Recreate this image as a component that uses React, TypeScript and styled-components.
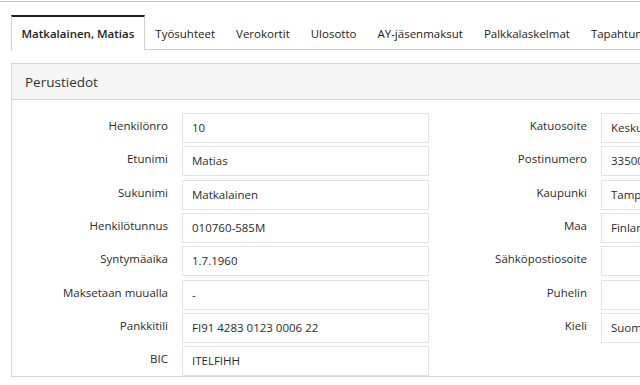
import React from 'react';
import styled, { createGlobalStyle, css } from 'styled-components';

const GlobalStyle = createGlobalStyle`
  html, body {
    margin: 0;
    padding: 0;
    background: #ffffff;
    overflow: hidden;
  }
  body {
    font-family: 'Open Sans', 'Liberation Sans', sans-serif;
    color: #333333;
  }
`;

const Page = styled.div`
  width: 640px;
  height: 385px;
  overflow: hidden;
  border-top: 1px solid #c8c8c8;
  margin-top: 1px;
  box-sizing: border-box;
  padding: 13px 0 0 11px;
`;

const TabBar = styled.div`
  display: flex;
  height: 35px;
  border-bottom: 1px solid #cfcfcf;
  width: 900px;
  box-sizing: border-box;
`;

const Tab = styled.div<{ active?: boolean }>`
  display: flex;
  align-items: center;
  padding: 0 9.5px;
  font-size: 11.5px;
  white-space: nowrap;
  color: #222222;
  border: 1px solid transparent;
  border-bottom: none;
  margin-bottom: -1px;
  ${(props) =>
    props.active
      ? css`
          font-weight: 600;
          background: #ffffff;
          border-color: #d2d2d2;
          border-top: 2px solid #1e1e1e;
        `
      : ''}
`;

const Panel = styled.div`
  margin-top: 13px;
  width: 900px;
  border: 1px solid #d6d6d6;
  border-right: none;
`;

const PanelHeader = styled.div`
  height: 35px;
  background: #f5f5f5;
  border-bottom: 1px solid #d6d6d6;
  display: flex;
  align-items: center;
  padding-left: 13px;
  font-size: 13.5px;
  color: #333333;
`;

const PanelBody = styled.div`
  display: flex;
  gap: 8px;
  padding: 13px 0 0 6px;
`;

const FieldColumn = styled.div`
  display: grid;
  grid-template-columns: 150px 247px;
  column-gap: 14px;
  row-gap: 3.33px;
  align-content: start;
`;

const Label = styled.div`
  font-size: 11.5px;
  text-align: right;
  color: #2b2b2b;
  height: 30px;
  line-height: 26px;
  white-space: nowrap;
`;

const Value = styled.div`
  height: 30px;
  box-sizing: border-box;
  border: 1px solid #e3e3e3;
  padding: 0 9px;
  font-size: 11.5px;
  line-height: 28px;
  color: #2b2b2b;
  white-space: nowrap;
  overflow: hidden;
`;

const tabs = [
  'Matkalainen, Matias',
  'Työsuhteet',
  'Verokortit',
  'Ulosotto',
  'AY-jäsenmaksut',
  'Palkkalaskelmat',
  'Tapahtumat',
];

const leftFields: [string, string][] = [
  ['Henkilönro', '10'],
  ['Etunimi', 'Matias'],
  ['Sukunimi', 'Matkalainen'],
  ['Henkilötunnus', '010760-585M'],
  ['Syntymäaika', '1.7.1960'],
  ['Maksetaan muualla', '-'],
  ['Pankkitili', 'FI91 4283 0123 0006 22'],
  ['BIC', 'ITELFIHH'],
];

const rightFields: [string, string][] = [
  ['Katuosoite', 'Keskuskatu 1'],
  ['Postinumero', '33500'],
  ['Kaupunki', 'Tampere'],
  ['Maa', 'Finland'],
  ['Sähköpostiosoite', ''],
  ['Puhelin', ''],
  ['Kieli', 'Suomi'],
];

const Fields: React.FC<{ items: [string, string][] }> = ({ items }) => (
  <FieldColumn>
    {items.map(([label, value]) => (
      <React.Fragment key={label}>
        <Label>{label}</Label>
        <Value>{value}</Value>
      </React.Fragment>
    ))}
  </FieldColumn>
);

const App: React.FC = () => (
  <>
    <GlobalStyle />
    <Page>
      <TabBar>
        {tabs.map((tab, index) => (
          <Tab key={tab} active={index === 0}>
            {tab}
          </Tab>
        ))}
      </TabBar>
      <Panel>
        <PanelHeader>Perustiedot</PanelHeader>
        <PanelBody>
          <Fields items={leftFields} />
          <Fields items={rightFields} />
        </PanelBody>
      </Panel>
    </Page>
  </>
);

export default App;
